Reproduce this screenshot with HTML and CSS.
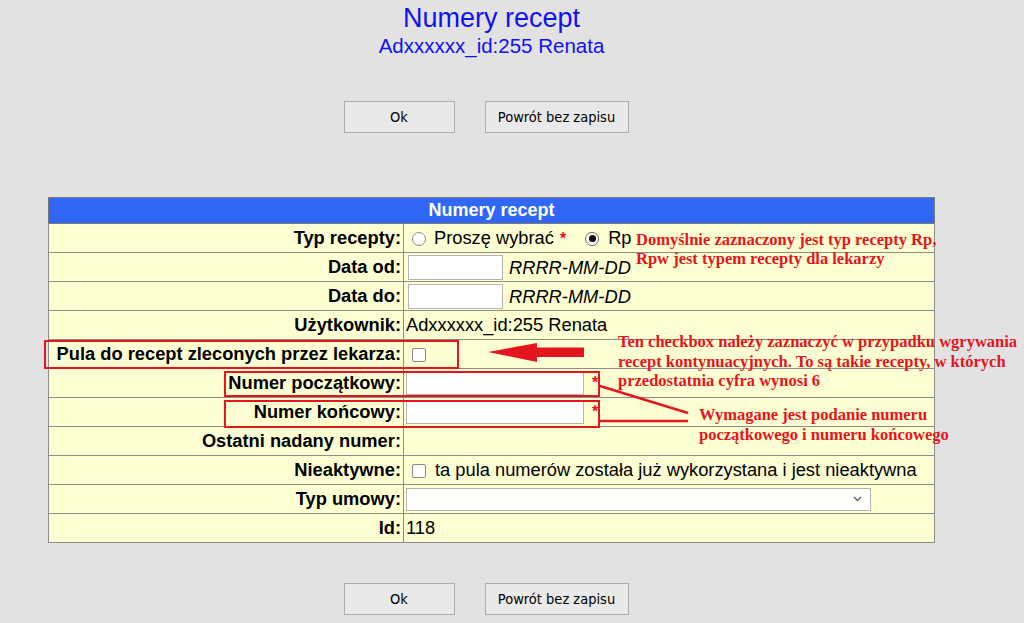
FILE: index.html
```html
<!DOCTYPE html>
<html lang="pl">
<head>
<meta charset="utf-8">
<title>Numery recept</title>
<link rel="stylesheet" href="styles.css">
</head>
<body>
<div class="page">
  <header class="top">
    <h1 class="title">Numery recept</h1>
    <div class="subtitle">Adxxxxxx_id:255 Renata</div>
  </header>

  <div class="buttons">
    <button class="btn btn-ok" type="button">Ok</button>
    <button class="btn btn-back" type="button">Powrót bez zapisu</button>
  </div>

  <table class="form">
    <colgroup><col class="c-lbl"><col class="c-val"></colgroup>
    <tr><th colspan="2">Numery recept</th></tr>
    <tr>
      <td class="lbl">Typ recepty:</td>
      <td class="val"><span class="radio"></span><span class="opt">Proszę wybrać</span><span class="req">*</span><span class="radio checked"></span><span class="opt">Rp</span></td>
    </tr>
    <tr>
      <td class="lbl">Data od:</td>
      <td class="val"><span class="inp date"></span><span class="hint">RRRR-MM-DD</span></td>
    </tr>
    <tr>
      <td class="lbl">Data do:</td>
      <td class="val"><span class="inp date"></span><span class="hint">RRRR-MM-DD</span></td>
    </tr>
    <tr>
      <td class="lbl">Użytkownik:</td>
      <td class="val">Adxxxxxx_id:255 Renata</td>
    </tr>
    <tr>
      <td class="lbl">Pula do recept zleconych przez lekarza:</td>
      <td class="val"><span class="check"></span></td>
    </tr>
    <tr>
      <td class="lbl">Numer początkowy:</td>
      <td class="val"><span class="inp num"></span><span class="req req-num">*</span></td>
    </tr>
    <tr>
      <td class="lbl">Numer końcowy:</td>
      <td class="val"><span class="inp num"></span><span class="req req-num">*</span></td>
    </tr>
    <tr>
      <td class="lbl">Ostatni nadany numer:</td>
      <td class="val"></td>
    </tr>
    <tr>
      <td class="lbl">Nieaktywne:</td>
      <td class="val"><span class="check"></span><span class="opt">ta pula numerów została już wykorzystana i jest nieaktywna</span></td>
    </tr>
    <tr>
      <td class="lbl">Typ umowy:</td>
      <td class="val"><span class="select"><svg class="chev" width="9" height="6" viewBox="0 0 9 6"><path d="M1 1 L4.5 4.5 L8 1" fill="none" stroke="#555" stroke-width="1.2"/></svg></span></td>
    </tr>
    <tr>
      <td class="lbl">Id:</td>
      <td class="val">118</td>
    </tr>
  </table>

  <div class="buttons buttons-bottom">
    <button class="btn btn-ok" type="button">Ok</button>
    <button class="btn btn-back" type="button">Powrót bez zapisu</button>
  </div>

  <!-- annotation overlays -->
  <div class="note note-1">Domyślnie zaznaczony jest typ recepty Rp,<br>Rpw jest typem recepty dla lekarzy</div>
  <div class="note note-2">Ten checkbox należy zaznaczyć w przypadku wgrywania<br>recept kontynuacyjnych. To są takie recepty, w których<br>przedostatnia cyfra wynosi 6</div>
  <div class="note note-3">Wymagane jest podanie numeru<br>początkowego i numeru końcowego</div>

  <div class="mark mark-1"></div>
  <div class="mark mark-2"></div>
  <div class="mark mark-3"></div>

  <svg class="arrows" width="983" height="623" viewBox="0 0 983 623">
    <polygon points="488,352 537,343 537,347.5 584,347.5 584,357 537,357 537,362" fill="#e3161e"/>
    <line x1="600" y1="386" x2="688" y2="413" stroke="#e3161e" stroke-width="2.5"/>
    <line x1="600" y1="421" x2="688" y2="421" stroke="#e3161e" stroke-width="2.5"/>
  </svg>
</div>
</body>
</html>
```

FILE: styles.css
```css
html, body {
  margin: 0;
  padding: 0;
  background: #e2e2e2;
}

body {
  font-family: "Liberation Sans", Arial, sans-serif;
  color: #000;
  overflow: hidden;
}

.page {
  position: relative;
  width: 983px;
  height: 623px;
}

.top {
  padding-top: 3px;
  text-align: center;
  color: #1111ee;
}

.title {
  margin: 0;
  font-size: 27px;
  font-weight: normal;
  line-height: 31px;
}

.subtitle {
  font-size: 20.5px;
  line-height: 24px;
}

.buttons {
  display: flex;
  justify-content: center;
  gap: 30px;
  padding-right: 11px;
  margin-top: 43px;
}

.buttons-bottom {
  margin-top: 40px;
}

.btn {
  height: 32px;
  margin: 0;
  padding: 0;
  border: 1px solid #adadad;
  background: #e9e9e9;
  font-family: "DejaVu Sans Condensed", "DejaVu Sans", sans-serif;
  font-size: 14.5px;
  color: #000;
}

.btn-ok { width: 111px; }
.btn-back { width: 144px; }

.form {
  margin: 64px auto 0;
  width: 887px;
  table-layout: fixed;
  border-collapse: collapse;
  border: 1px solid #7a7a7a;
  background: #fefed3;
  font-size: 18.3px;
}

.c-lbl { width: 355px; }

.form th {
  height: 25px;
  padding: 0;
  background: #3068f5;
  color: #fff;
  font-weight: bold;
  font-size: 18px;
  border: 1px solid #7a7a7a;
}

.form td {
  height: 28px;
  padding: 0 2px;
  border: 1px solid #8c8c8c;
  white-space: nowrap;
  vertical-align: middle;
  line-height: 20px;
}

.lbl {
  text-align: right;
  font-weight: bold;
}

.val {
  text-align: left;
}

.val > span {
  vertical-align: middle;
}

.radio {
  display: inline-block;
  box-sizing: border-box;
  width: 14px;
  height: 14px;
  margin: 0 8px 0 6px;
  border: 1px solid #8a8a8a;
  border-radius: 50%;
  background: #fff;
  position: relative;
}

.radio.checked {
  margin-left: 19px;
  margin-right: 9px;
  border-color: #666;
}

.radio.checked::after {
  content: "";
  position: absolute;
  left: 2.5px;
  top: 2.5px;
  width: 7px;
  height: 7px;
  border-radius: 50%;
  background: #111;
}

.req {
  color: #e3161e;
  font-weight: bold;
  font-size: 16px;
  margin-left: 6px;
}

.req-num {
  margin-left: 8px;
}

.check {
  display: inline-block;
  box-sizing: border-box;
  width: 14px;
  height: 14px;
  margin: 0 9px 0 6px;
  border: 1px solid #8a8a8a;
  border-radius: 2px;
  background: #fff;
}

.inp {
  display: inline-block;
  box-sizing: border-box;
  background: #fff;
  border: 1px solid #b4b4b4;
}

.inp.date {
  width: 95px;
  height: 25px;
  margin: 0 6px 0 2px;
}

.inp.num {
  width: 178px;
  height: 23px;
}

.hint {
  font-style: italic;
}

.select {
  display: inline-flex;
  align-items: center;
  justify-content: flex-end;
  box-sizing: border-box;
  width: 465px;
  height: 23px;
  padding-right: 8px;
  background: #fff;
  border: 1px solid #b4b4b4;
}

.note {
  position: absolute;
  white-space: nowrap;
  color: #e3161e;
  font-family: "Liberation Serif", "Times New Roman", serif;
  font-weight: bold;
  font-size: 16.5px;
}

.note-1 { left: 636px; top: 230px; line-height: 19px; }
.note-2 { left: 618px; top: 332px; line-height: 19.5px; }
.note-3 { left: 699px; top: 405px; line-height: 20px; }

.mark {
  position: absolute;
  box-sizing: border-box;
  border: 2px solid #e3161e;
}

.mark-1 { left: 44px; top: 340px; width: 415px; height: 29px; }
.mark-2 { left: 224px; top: 371px; width: 376px; height: 26px; }
.mark-3 { left: 224px; top: 400px; width: 376px; height: 28px; }

.arrows {
  position: absolute;
  left: 0;
  top: 0;
  pointer-events: none;
}
```
